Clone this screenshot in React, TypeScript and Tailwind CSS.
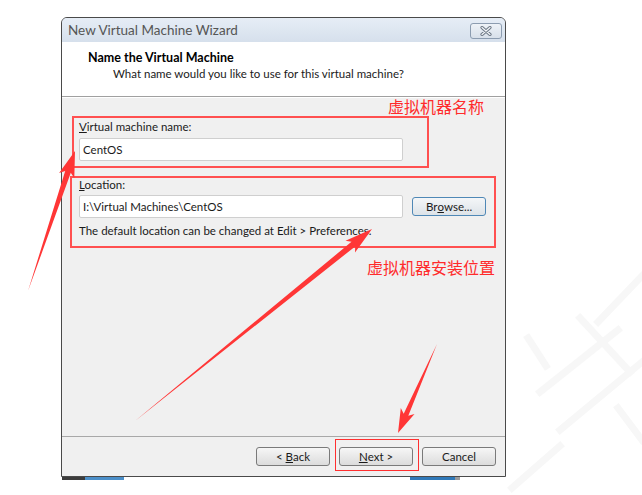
import React from "react";

const ui = "font-['Lato','Liberation_Sans',sans-serif]";
const cjk = "font-['Noto_Sans_CJK_SC','Noto_Sans',sans-serif]";

// tapered arrow: thin tail, wide head with swept-back wings
function arrowPoints(
  x1: number,
  y1: number,
  x2: number,
  y2: number,
  headLen: number,
  headW: number,
  shaftW: number
) {
  const dx = x2 - x1;
  const dy = y2 - y1;
  const len = Math.hypot(dx, dy);
  const ux = dx / len;
  const uy = dy / len;
  const nx = -uy;
  const ny = ux;
  const bx = x2 - ux * headLen;
  const by = y2 - uy * headLen;
  const wx = bx - ux * 4;
  const wy = by - uy * 4;
  const pts = [
    [x1, y1],
    [bx + (nx * shaftW) / 2, by + (ny * shaftW) / 2],
    [wx + (nx * headW) / 2, wy + (ny * headW) / 2],
    [x2, y2],
    [wx - (nx * headW) / 2, wy - (ny * headW) / 2],
    [bx - (nx * shaftW) / 2, by - (ny * shaftW) / 2],
  ];
  return pts.map((p) => p.map((v) => v.toFixed(1)).join(",")).join(" ");
}

function Btn({
  children,
  blue,
}: {
  children: React.ReactNode;
  blue?: boolean;
}) {
  return (
    <div
      className={`flex items-center justify-center w-[74px] h-[19px] rounded-[3px] border text-[11.5px] text-[#1a1a1a] ${
        blue
          ? "border-[#4f88b6] bg-gradient-to-b from-[#f4f6f8] to-[#dde3e8]"
          : "border-[#7a7a7a] bg-gradient-to-b from-[#f6f6f6] to-[#dcdcdc]"
      }`}
    >
      {children}
    </div>
  );
}

export default function App() {
  return (
    <div
      className={`relative w-[642px] h-[495px] overflow-hidden bg-white ${ui}`}
    >
      {/* faint watermark behind the window */}
      <svg
        className="absolute inset-0 pointer-events-none"
        width="642"
        height="495"
      >
        <g stroke="#f7f7f7" strokeWidth="7" strokeLinecap="square" fill="none">
          <path d="M598 322 L642 276" />
          <path d="M580 318 L630 372" />
          <path d="M528 338 L546 366" />
          <path d="M540 392 L618 330" />
          <path d="M560 430 L642 362" />
          <path d="M512 488 L560 446" />
          <path d="M618 408 L642 440" />
        </g>
      </svg>

      {/* dialog window */}
      <div className="relative ml-[61px] mt-[17px] w-[445px] h-[460px] flex flex-col rounded-t-[6px] border border-[#4a4a4a] bg-[#dbe4ef] overflow-hidden">
        {/* title bar */}
        <div className="h-[24px] flex items-center justify-between pl-[6px] pr-[3px] bg-gradient-to-b from-[#e6edf6] to-[#d6e0ec]">
          <span className="text-[13.5px] text-[#555]">
            New Virtual Machine Wizard
          </span>
          <div className="w-[32px] h-[16px] mt-[2px] flex items-center justify-center rounded-[3px] border border-[#8c9cb0] bg-gradient-to-b from-[#eef2f7] to-[#d8e0ea]">
            <svg width="12" height="10" viewBox="0 0 12 10">
              <path
                d="M2 1.5 L10 8.5 M10 1.5 L2 8.5"
                stroke="#6d7886"
                strokeWidth="3.2"
                strokeLinecap="round"
              />
              <path
                d="M2 1.5 L10 8.5 M10 1.5 L2 8.5"
                stroke="#f4f6f9"
                strokeWidth="1.2"
                strokeLinecap="round"
              />
            </svg>
          </div>
        </div>

        {/* header */}
        <div className="h-[55px] bg-white border-b border-[#a0a0a0] pl-[26px] pt-[8px]">
          <div className="text-[12.5px] font-bold text-black leading-[15px]">
            Name the Virtual Machine
          </div>
          <div className="text-[11.5px] text-[#1a1a1a] leading-[15px] mt-[1px] pl-[25px]">
            What name would you like to use for this virtual machine?
          </div>
        </div>

        {/* body */}
        <div className="flex-1 bg-[#f0f0f0] border-t border-white flex flex-col pt-[18px]">
          <div className="ml-[10px] w-[357px] border-2 border-[#ff5050] pt-[2px] pb-[5px] pl-[5px]">
            <div className="text-[11.5px] leading-[14px] text-[#1a1a1a]">
              <span className="underline">V</span>irtual machine name:
            </div>
            <div className="mt-[4px] w-[324px] h-[23px] rounded-[2px] border border-[#cfcfcf] bg-white flex items-center pl-[3px] text-[11.5px] text-[#1a1a1a]">
              CentOS
            </div>
          </div>

          <div className="mt-[8px] ml-[8px] w-[426px] border-2 border-[#ff5050] pb-[8px] pl-[7px]">
            <div className="text-[11.5px] leading-[14px] text-[#1a1a1a]">
              <span className="underline">L</span>ocation:
            </div>
            <div className="mt-[3px] flex items-center gap-[9px]">
              <div className="w-[324px] h-[23px] rounded-[2px] border border-[#cfcfcf] bg-white flex items-center pl-[3px] text-[11.5px] text-[#1a1a1a]">
                I:\Virtual Machines\CentOS
              </div>
              <Btn blue>
                Br<span className="underline">o</span>wse...
              </Btn>
            </div>
            <div className="mt-[6px] text-[11.5px] leading-[14px] text-[#1a1a1a]">
              The default location can be changed at Edit &gt; Preferences.
            </div>
          </div>
        </div>

        {/* footer */}
        <div className="h-[40px] bg-[#f0f0f0] border-t border-[#a8a8a8] flex justify-end items-start pt-[10px] pr-[9px] gap-[9px]">
          <Btn>
            &lt; <span className="underline ml-[3px]">B</span>ack
          </Btn>
          <div className="relative">
            <Btn>
              <span className="underline">N</span>ext &gt;
            </Btn>
            <div className="absolute -left-[4px] -right-[6px] -top-[8px] -bottom-[5px] border border-[#ff3030]" />
          </div>
          <Btn>Cancel</Btn>
        </div>

        {/* annotations */}
        <div
          className={`absolute left-[326px] top-[78px] text-[16px] leading-[20px] text-[#ff2b2b] ${cjk}`}
        >
          虚拟机器名称
        </div>
        <div
          className={`absolute left-[305px] top-[239px] text-[16px] leading-[20px] text-[#ff2b2b] ${cjk}`}
        >
          虚拟机器安装位置
        </div>
      </div>

      {/* taskbar remnants under the window */}
      <div className="flex h-[3px]">
        <div className="ml-[62px] w-[23px] bg-[#3c3c3c]" />
        <div className="w-[39px] bg-[#4b8fc9]" />
        <div className="ml-[286px] w-[45px] bg-[#2f78b8]" />
        <div className="w-[5px] bg-[#9a9a9a]" />
      </div>

      {/* red arrows */}
      <svg
        className="absolute inset-0 pointer-events-none"
        width="642"
        height="495"
      >
        <g fill="#ff3636">
          <polygon points={arrowPoints(28, 291, 75, 151, 22, 16, 6)} />
          <polygon points={arrowPoints(135, 421, 372, 229, 24, 15, 6)} />
          <polygon points={arrowPoints(437, 344, 398, 433, 20, 15, 5)} />
        </g>
      </svg>
    </div>
  );
}
